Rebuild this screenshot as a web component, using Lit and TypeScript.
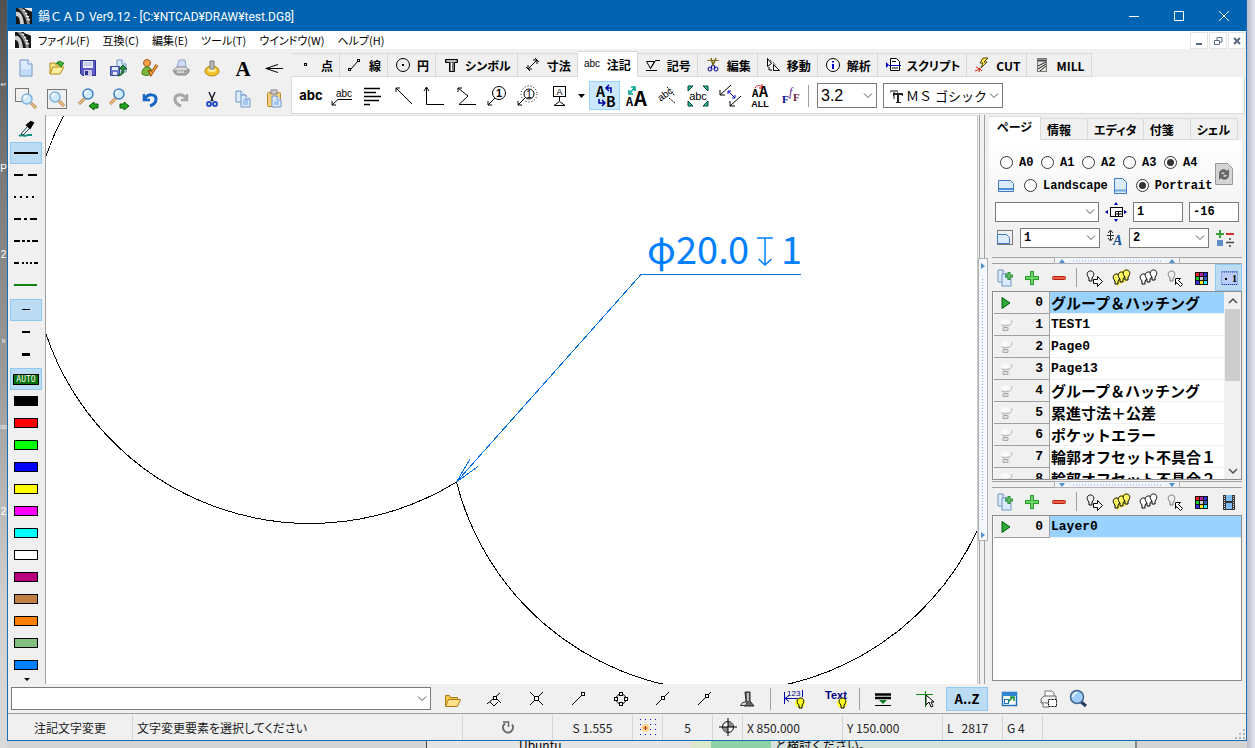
import { LitElement, html, svg, css, nothing, TemplateResult } from "lit";
import { customElement, property, state } from "lit/decorators.js";
import { classMap } from "lit/directives/class-map.js";

type Glyph = TemplateResult;

const icon = (w: number, h: number, body: unknown): Glyph =>
  html`<svg class="icon" width=${w} height=${h} viewBox="0 0 ${w} ${h}" aria-hidden="true">${body}</svg>`;

/* ---------- shared pieces ---------- */
const K = "#000";
const glass = (x: number, y: number) => svg`
  <g transform="translate(${x} ${y})">
    <line x1="10" y1="10" x2="16" y2="16" stroke="#b07a38" stroke-width="3"/>
    <line x1="10" y1="10" x2="16" y2="16" stroke="#f0c890" stroke-width="1.5"/>
    <circle cx="7" cy="7" r="5" fill="#cfeaff" stroke="#7fb2dc" stroke-width="1.5"/>
    <path d="M4 7a3 3 0 0 1 3-3" stroke="#fff" stroke-width="2" fill="none"/>
  </g>`;
const glassLeft = svg`
  <line x1="8" y1="11" x2="2" y2="17" stroke="#b07a38" stroke-width="3"/>
  <line x1="8" y1="11" x2="2" y2="17" stroke="#f0c890" stroke-width="1.5"/>
  <circle cx="11" cy="7" r="5" fill="#cfeaff" stroke="#3f7fc4" stroke-width="1.5"/>
  <path d="M8 7a3 3 0 0 1 3-3" stroke="#fff" stroke-width="2" fill="none"/>`;
const page = (x: number, y: number, w: number, h: number) => svg`
  <path d="M${x} ${y}h${w - 4}l4 4v${h - 4}h${-w}z" fill="#dcebfc" stroke="#6f94c4"/>
  <path d="M${x + w - 4} ${y}v4h4" fill="#fff" stroke="#6f94c4"/>`;
const appLogo = icon(16, 16, svg`
  <rect width="16" height="16" fill="#171717"/>
  <path d="M0 4C4 3 7 7 8 16H4C4 11 3 8 0 8z" fill="#cfcfcf"/>
  <path d="M2 0h4c4 3 7 9 8 16h-3C10 9 6 4 2 0z" fill="#8e8e8e"/>
  <path d="M7 2l2 1M9 5l2 1M10 8l3 1M11 11l3 1M9 0h7v3z" stroke="#eee" stroke-width="1.5" fill="#ddd"/>`);

/* ---------- main tool block ---------- */
const mainTools: [string, Glyph][] = [
  ["新規", icon(24, 24, svg`<path d="M6 4h8l4 4v12H6z" fill="#dcebfc" stroke="#6f94c4"/><path d="M7 13h10v6H7z" fill="#c2dcf8"/><path d="M14 4v4h4" fill="#fff" stroke="#6f94c4"/>`)],
  ["開く", icon(24, 24, svg`<path d="M5 18V7h5l1 2h5v3" fill="#fbe58a" stroke="#b28a14"/><path d="M5 18l3-7h11l-4 7z" fill="#fdf0a0" stroke="#b28a14"/><path d="M11 8c2-4 6-3 6-1h2l-3 4-4-4h2" fill="#46b33a" stroke="#1f7a17"/>`)],
  ["保存", icon(24, 24, svg`<path d="M4.500 4.500h15v15h-13l-2-2z" fill="#5a5ac8" stroke="#2f2f8f"/><rect x="7" y="5" width="10" height="7" fill="#e8ecff"/><path d="M8 7h8M8 9h8" stroke="#a9b0e0"/><rect x="8" y="14" width="8" height="6" fill="#c9cce0"/><rect x="9" y="15" width="3" height="4" fill="#2f2f8f"/>`)],
  ["書出", icon(24, 24, svg`${page(10, 4, 9, 12)}<path d="M3.500 10.500h9v9h-9z" fill="#6a78c8" stroke="#39459a"/><rect x="5" y="11" width="6" height="3" fill="#e8ecff"/><rect x="6" y="16" width="4" height="3" fill="#dfe4fa"/><path d="M11 19c3 0 4-2 4-6h-3l4-4 4 4h-3c0 5-2 6-6 7z" fill="#2c8f3c" stroke="#145a20"/>`)],
  ["編集者", icon(24, 24, svg`<circle cx="9" cy="7" r="3.500" fill="#f2a04a" stroke="#a2591a"/><path d="M4 18c0-5 2-7 5-7s5 2 5 6c-2 3-8 3-10 1z" fill="#79b83a" stroke="#3f7a14"/><path d="M11 14l2 4 6-9" stroke="#8a3a10" stroke-width="3" fill="none"/><path d="M12 15l1 3 6-9" stroke="#f0a030" stroke-width="1.500" fill="none"/>`)],
  ["印刷", icon(24, 24, svg`<path d="M10 4h6l1 7H8z" fill="#cfdcfa" stroke="#90a4c8"/><path d="M4 14l4-3h9l3 3-3 4H6z" fill="#dadada" stroke="#999"/><path d="M5 15h12l3-2v3l-3 3H8z" fill="#a8a8a8" stroke="#888"/><path d="M8 16h7" stroke="#fff"/>`)],
  ["設定", icon(24, 24, svg`<ellipse cx="12" cy="15" rx="7" ry="5" fill="#f2c230" stroke="#b98308"/><ellipse cx="12" cy="14" rx="4" ry="2" fill="#fff1a0"/><path d="M10 5h4v8h-4z" fill="#b9b9b9" stroke="#7d7d7d"/>`)],
  ["文字", icon(24, 24, svg`<text x="12" y="20" text-anchor="middle" font-family="Liberation Serif" font-weight="700" font-size="21">A</text>`)],
  ["矢印", icon(24, 24, svg`<path d="M3.500 12.500H21M16 8.500l-12 4 12 4" stroke="#000" fill="none"/>`)],
  ["範囲拡大", icon(24, 24, svg`<rect x="1.500" y="1.500" width="13" height="13" fill="none" stroke="#777"/>${glass(6, 5)}`)],
  ["全体表示", icon(24, 24, svg`<rect x="2.500" y="2.500" width="19" height="19" fill="none" stroke="#777"/>${glass(3, 3)}`)],
  ["前表示", icon(24, 24, svg`<g transform="translate(1 0)">${glassLeft}</g><path d="M13 19l5-4v2h4v4h-4v2z" fill="#23a51e" stroke="#0d5c0a"/>`)],
  ["次表示", icon(24, 24, svg`<g transform="translate(1 0)">${glassLeft}</g><path d="M22 19l-5-4v2h-4v4h4v2z" fill="#23a51e" stroke="#0d5c0a"/>`)],
  ["元に戻す", icon(24, 24, svg`<path d="M6 7v6h6" fill="none" stroke="#1767c4" stroke-width="2.500"/><path d="M7 12c3-6 11-5 11 0 0 4-3 6-6 7" fill="none" stroke="#1767c4" stroke-width="3"/>`)],
  ["やり直し", icon(24, 24, svg`<path d="M18 7v6h-6" fill="none" stroke="#a6a6a6" stroke-width="2.500"/><path d="M17 12c-3-6-11-5-11 0 0 4 3 6 6 7" fill="none" stroke="#a6a6a6" stroke-width="3"/>`)],
  ["切取り", icon(24, 24, svg`<path d="M9 5l4 9M15 5l-4 9" stroke="#223" stroke-width="1.500"/><circle cx="9" cy="17" r="2" fill="none" stroke="#2450c0" stroke-width="2"/><circle cx="15" cy="17" r="2" fill="none" stroke="#2450c0" stroke-width="2"/>`)],
  ["コピー", icon(24, 24, svg`${page(5, 4, 9, 11)}${page(10, 8, 9, 12)}<path d="M12 13h5M12 15h5M12 17h5" stroke="#6fa0e0"/>`)],
  ["貼付け", icon(24, 24, svg`<rect x="5.500" y="5.500" width="13" height="14" rx="1" fill="#f3cf7c" stroke="#b88a2e"/><rect x="9" y="3" width="6" height="4" fill="#ccc" stroke="#888"/>${page(10, 9, 9, 11)}<path d="M12 15h5M12 17h5" stroke="#6fa0e0"/>`)],
];

/* ---------- ribbon tabs ---------- */
const ribbonTabs: [string, Glyph][] = [
  ["点", icon(20, 20, svg`<rect x="7.500" y="8.500" width="2" height="2" fill="none" stroke="#000"/>`)],
  ["線", icon(20, 20, svg`<path d="M6 14L13 6" stroke="#000"/><rect x="3.500" y="13.500" width="2" height="2" fill="#fff" stroke="#000"/><rect x="12.500" y="4.500" width="2" height="2" fill="#fff" stroke="#000"/>`)],
  ["円", icon(20, 20, svg`<circle cx="10" cy="10" r="6.500" fill="none" stroke="#000"/><rect x="9" y="9" width="2" height="2"/>`)],
  ["シンボル", icon(20, 20, svg`<path d="M4.500 4.500h12v3h-3v9h-5v-9h-4z" fill="#777" stroke="#000"/><path d="M6 6h9M10.500 8v8" stroke="#fff"/>`)],
  ["寸法", icon(20, 20, svg`<path d="M5 14l9-9M5 10v4h4M10 5h4v4M3 12l4 4M12 3l4 4" stroke="#000" fill="none"/>`)],
  ["注記", icon(20, 20, svg`<text x="1" y="13" font-family="Liberation Sans" font-weight="400" font-size="10">abc</text>`)],
  ["記号", icon(20, 20, svg`<path d="M3.500 6.500h8l-4 7zM7.500 13.500l5-8H17M3 15.500h11" stroke="#000" fill="none"/>`)],
  ["編集", icon(20, 20, svg`<path d="M4 5.500h12" stroke="#887720"/><path d="M8 3l2 7 3-7" stroke="#776610" fill="none" stroke-width="1.500"/><path d="M9 10l-1 4M11 10l1 4" stroke="#00a"/><circle cx="7" cy="14" r="2" fill="none" stroke="#00a"/><circle cx="13" cy="14" r="2" fill="none" stroke="#00a"/>`)],
  ["移動", icon(20, 20, svg`<path d="M4.500 3.500v8l4-3zM10.500 9.500v6h6zM6 12v3h3" fill="none" stroke="#000"/><path d="M7 5l6 5" stroke="#000" stroke-dasharray="1 1"/>`)],
  ["解析", icon(20, 20, svg`<circle cx="10" cy="10" r="6.500" fill="#fff" stroke="#000"/><path d="M10 9v5M10 6v1.500" stroke="#00c" stroke-width="2"/>`)],
  ["スクリプト", icon(20, 20, svg`<path d="M7.500 3.500h6l3 3v9h-9z" fill="#fff" stroke="#000"/><path d="M3 7l3 3-3 3z" fill="#00c"/><path d="M6 10.500h12" stroke="#00c"/><path d="M9 6.500h4M9 13h6" stroke="#000"/>`)],
  ["CUT", icon(20, 20, svg`<path d="M11 3h5l-4 4h3l-6 6 2-5H8z" fill="#ffe94a" stroke="#554400"/><path d="M4 12l4 2M3 16l5-2M7 17l1-4M10 16l-2-2" stroke="#e02010"/>`)],
  ["MILL", icon(20, 20, svg`<rect x="5.500" y="3.500" width="9" height="13" fill="#e4e4dc" stroke="#777"/><path d="M6 5.500h8" stroke="#444" stroke-width="2"/><path d="M6 11l8-4M6 14l8-5M8 16l6-5" stroke="#222"/>`)],
];

/* ---------- annotation tools ---------- */
const noteTools: [string, Glyph, string?][] = [
  ["文字", icon(26, 26, svg`<text x="13" y="17" text-anchor="middle" font-family="Inter, Liberation Sans" font-weight="700" font-size="13">abc</text>`)],
  ["引出文字", icon(26, 26, svg`<text x="7" y="14" font-family="Liberation Sans" font-size="10">abc</text><path d="M23 16.500H9L3 22M3 18v4h4" stroke="#000" fill="none"/>`)],
  ["複数行", icon(26, 26, svg`<path d="M4 5.500h16M4 9.500h12M4 13.500h17M4 17.500h15M4 21.500h6" stroke="#000" stroke-width="1.500"/>`)],
  ["引出線", icon(26, 26, svg`<path d="M5 5l16 16M5 9V5h4" stroke="#000" fill="none"/>`)],
  ["引出線2", icon(26, 26, svg`<path d="M4.500 4v17.500H22M2 8l2.500-4L7 8" stroke="#000" fill="none"/>`)],
  ["引出線3", icon(26, 26, svg`<path d="M5 5l10 8-9 8.500h17M5 9V5h4" stroke="#000" fill="none"/>`)],
  ["バルーン", icon(26, 26, svg`<circle cx="15" cy="10" r="6.500" fill="none" stroke="#000"/><text x="15" y="14" text-anchor="middle" font-family="Liberation Sans" font-weight="700" font-size="11">1</text><path d="M11 15l-7 7M4 18v4h4" stroke="#000" fill="none"/>`)],
  ["自動バルーン", icon(26, 26, svg`<circle cx="14" cy="11" r="5" fill="none" stroke="#000"/><circle cx="14" cy="11" r="8" fill="none" stroke="#000" stroke-dasharray="1 2"/><text x="14" y="15" text-anchor="middle" font-family="Liberation Sans" font-size="10">1</text><path d="M10 15l-7 7M3 18v4h4" stroke="#000" fill="none"/>`)],
  ["データム", icon(26, 26, svg`<rect x="7.500" y="3.500" width="12" height="10" fill="none" stroke="#000"/><text x="13.500" y="12" text-anchor="middle" font-family="Liberation Sans" font-size="9">A</text><path d="M13.500 14v4M8 22.500l5.500-4 5.500 4z" stroke="#000" fill="none"/>`)],
  ["その他", icon(8, 26, svg`<path d="M0 11h7l-3.500 4z"/>`), "narrow"],
  ["文字変更", icon(26, 26, svg`<text x="4" y="14" font-family="Noto Sans CJK JP" font-weight="700" font-size="14">A</text><text x="14" y="24" font-family="Noto Sans CJK JP" font-weight="700" font-size="14">B</text><path d="M14 5h5v5M17 2l-3 3 3 3M7 16v4h5M10 17l3 3-3 3" stroke="#0000a0" stroke-width="1.500" fill="none"/>`), "on"],
  ["文字サイズ", icon(26, 26, svg`<text x="3" y="23" font-family="Noto Sans CJK JP" font-weight="700" font-size="11">A</text><text x="11" y="23" font-family="Noto Sans CJK JP" font-weight="700" font-size="20">A</text><path d="M6 11l6-7M6 7v4h4M8 4h4v4" stroke="#00a890" stroke-width="1.500" fill="none"/>`)],
  ["文字回転", icon(26, 26, svg`<text x="4" y="17" transform="rotate(-35 8 14)" font-family="Liberation Sans" font-size="10">abc</text><path d="M13 4l8 9M15 15l6 5" stroke="#000" fill="none" stroke-dasharray="2 1"/>`)],
  ["文字枠", icon(26, 26, svg`<text x="13" y="17" text-anchor="middle" font-family="Liberation Sans" font-size="11">abc</text><path d="M3 3h5L3 8zM23 3h-5l5 5zM3 23h5l-5-5zM23 23h-5l5-5z" fill="#20c0a0" stroke="#043"/>`)],
  ["矢印変更", icon(26, 26, svg`<path d="M15 2L4 12M4 7v5h5M25 13L14 23M14 18v5h5" stroke="#000" fill="none"/><path d="M12 8l7 7M12 11V8h3M19 12v3h-3" stroke="#00c" fill="none"/>`)],
  ["全文字変更", icon(26, 26, svg`<text x="5" y="14" font-family="Noto Sans CJK JP" font-weight="700" font-size="10">A</text><text x="12" y="14" font-family="Noto Sans CJK JP" font-weight="700" font-size="14">A</text><text x="13" y="24" text-anchor="middle" font-family="Liberation Sans" font-weight="700" font-size="9">ALL</text><path d="M8 5c2-3 5-3 7-1M12 5h3V1" stroke="#d01020" fill="none"/>`)],
  ["フォント", icon(26, 26, svg`<text x="4" y="20" font-family="Liberation Serif" font-weight="700" font-size="11" fill="#000090">F</text><text x="11" y="13" font-family="Liberation Serif" font-style="italic" font-size="12" fill="#702090">f</text><text x="15" y="18" font-family="Liberation Serif" font-weight="700" font-size="11" fill="#702040">F</text>`)],
];

/* ---------- snap / bottom tools ---------- */
const bulb = (x: number, y: number, s = K, f = "none") => svg`
  <path d="M${x + 2} ${y + 7}c-3-3-2-7 1.500-7s4.500 4 1.500 7v3h-3z" fill="${f}" stroke="${s}"/>`;
const snapTools: ([string, Glyph, string?] | null)[] = [
  ["開く", icon(24, 24, svg`<path d="M4.500 19V8.500h4l1 2h7v3" fill="#f4c64e" stroke="#a87c18"/><path d="M4.500 19.500l3-7h12l-3 7z" fill="#fde08a" stroke="#a87c18"/>`)],
  ["垂線", icon(24, 24, svg`<path d="M4 17L17 6M12 10l6 6M7 15l4 4 4-4" stroke="#000" fill="none"/><rect x="10.500" y="9.500" width="3" height="3" fill="#fff" stroke="#000"/>`)],
  ["交点", icon(24, 24, svg`<path d="M5 5l13 13M18 5L5 18" stroke="#000"/><rect x="9.500" y="9.500" width="4" height="4" fill="#fff" stroke="#000"/>`)],
  ["端点", icon(24, 24, svg`<path d="M5 18L15 8" stroke="#000"/><rect x="14.500" y="5.500" width="3" height="3" fill="#fff" stroke="#000"/>`)],
  ["円点", icon(24, 24, svg`<circle cx="12" cy="12" r="5" fill="none" stroke="#000"/><g fill="#fff" stroke="#000"><rect x="10.500" y="5.500" width="3" height="3"/><rect x="10.500" y="15.500" width="3" height="3"/><rect x="5.500" y="10.500" width="3" height="3"/><rect x="15.500" y="10.500" width="3" height="3"/></g>`)],
  ["中点", icon(24, 24, svg`<path d="M5 18L18 5" stroke="#000"/><rect x="10.500" y="9.500" width="3" height="3" fill="#fff" stroke="#000"/>`)],
  ["線上", icon(24, 24, svg`<path d="M5 18L18 5" stroke="#000"/><rect x="12.500" y="7.500" width="3" height="3" fill="#fff" stroke="#000"/>`)],
  ["測定", icon(24, 24, svg`<path d="M10 5h5v9l4 5H9l2-5z" fill="#666" stroke="#222"/><path d="M13 6v8" stroke="#bbb" stroke-width="2"/><path d="M5.500 18.500h5l2-4-5 1z" fill="#ddd" stroke="#333"/>`)],
  null,
  ["寸法表示", icon(28, 28, svg`<path d="M4.500 7v12M22.500 5v7M5 13.500h17M5 13.500l4-3M5 13.500l4 3" stroke="#00a" fill="none"/><text x="7" y="11" font-family="Liberation Sans" font-size="8" fill="#000080">123</text><circle cx="20" cy="18" r="5" fill="#ffff20"/>${bulb(17, 13)}`)],
  ["文字表示", icon(28, 28, svg`<text x="3" y="14" font-family="Liberation Sans" font-weight="700" font-size="11" fill="#000080">Text</text><circle cx="20" cy="18" r="5" fill="#ffff20"/>${bulb(17, 13)}`)],
  null,
  ["線幅", icon(24, 24, svg`<path d="M4 7.500h16M4 11h16" stroke="#000" stroke-width="2.500"/><path d="M8 13h8l-4 4z" fill="#088020"/><path d="M4 18.500h16" stroke="#000"/>`)],
  ["選択", icon(24, 24, svg`<path d="M3 7.500h17M12.500 4v16" stroke="#109010"/><path d="M13 8v10l3-3 2 5 2-1-2-4h3z" fill="#fff" stroke="#000"/>`)],
  ["並べ替え", icon(28, 24, svg`<text x="14" y="17" text-anchor="middle" font-family="Noto Sans CJK JP" font-weight="700" font-size="13">A..Z</text>`), "on"],
  ["ウインドウ", icon(24, 24, svg`<rect x="5.500" y="5.500" width="14" height="13" fill="#fff" stroke="#2070b8" stroke-width="1.500"/><path d="M5 5h15v4H5z" fill="#2f86d0"/><rect x="7.500" y="12.500" width="4" height="4" fill="none" stroke="#2070b8"/><path d="M11 15l5-5M13 10h4v4" stroke="#109030" stroke-width="1.500" fill="none"/>`)],
  ["印刷範囲", icon(22, 24, svg`<path d="M7 4h7l2 2v4H7z" fill="#fff" stroke="#777"/><path d="M3 12l3-3h12v7H3z" fill="#eee" stroke="#666"/><path d="M5 15v5h6" stroke="#666" fill="#fff"/><rect x="10.500" y="12.500" width="8" height="7" fill="#fff" stroke="#000" stroke-dasharray="2 1"/>`), "mid"],
  ["検索", icon(20, 24, svg`<path d="M12 14l6 5" stroke="#223a66" stroke-width="3"/><circle cx="9" cy="10" r="6.500" fill="#9fd0fb" stroke="#44648c" stroke-width="1.500"/><path d="M5 10a4 4 0 0 1 4-4" stroke="#fff" stroke-width="1.500" fill="none"/>`), "narrow"],
];

/* ---------- list tools in the side panel ---------- */
const bulbs = (f: string) => svg`${bulb(2, 6, K, f)}${bulb(7, 4, K, f)}${bulb(12, 2, K, f)}`;
const listTools = (last: Glyph, lastOn: boolean): ([string, Glyph, boolean?] | null)[] => [
  ["複製", icon(20, 20, svg`${page(3, 2, 9, 12)}${page(7, 6, 9, 12)}<path d="M14 4v8M10 8h8" stroke="#2c8c38" stroke-width="3"/><path d="M14 5v6M11 8h6" stroke="#74cf72"/>`)],
  ["追加", icon(20, 20, svg`<path d="M10 3v14M3 10h14" stroke="#2c9a34" stroke-width="4"/><path d="M10 4v12M4 10h12" stroke="#6fd468" stroke-width="2"/>`)],
  ["削除", icon(20, 20, svg`<rect x="3.500" y="8.500" width="13" height="3" rx="1" fill="#f06048" stroke="#b02010"/>`)],
  null,
  ["表示", icon(20, 20, svg`${bulb(3, 3)}<path d="M9.500 11.500h4v-3l5 5-5 5v-3h-4z" fill="#fff" stroke="#000"/>`)],
  ["全表示", icon(20, 20, svg`<path d="M2 8l12-7 5 3-3 9-10 5z" fill="#fff860"/>${bulbs("#fff860")}`)],
  ["全非表示", icon(20, 20, bulbs("#fff"))],
  ["参照", icon(20, 20, svg`${bulb(3, 3, "#777")}<path d="M10.500 10.500h5l-2 2 4 4-2 2-4-4-1 2z" fill="#fff" stroke="#000"/>`)],
  ["色", icon(20, 20, svg`<rect x="3" y="4" width="13" height="13" fill="#111"/>${["#f22", "#c2208a", "#33d", "#2c2", "#ccc", "#36a", "#33f", "#fe2", "#2ff"].map(
    (c, i) => svg`<rect x=${4 + (i % 3) * 4} y=${5 + Math.floor(i / 3) * 4} width="3" height="3" fill=${c}/>`)}`)],
  ["モード", last, lastOn],
];
const rulerIcon = icon(20, 20, svg`<rect x="2.500" y="3.500" width="16" height="13" fill="#b9cdf8" stroke="#90a8e0"/><path d="M3 4h16M3 16.500h16" stroke="#1030b0" stroke-dasharray="1 1"/><text x="13" y="14" font-family="Liberation Serif" font-weight="700" font-size="10">1</text><rect x="6" y="10" width="2" height="2"/>`);
const filmIcon = icon(20, 20, svg`<rect x="4" y="3" width="12" height="15" fill="#333"/><rect x="7" y="3" width="6" height="6" fill="#7fbdf5"/><rect x="7" y="11" width="6" height="6" fill="#7fbdf5"/><path d="M5.500 4v13M14.500 4v13" stroke="#ddd" stroke-dasharray="1 1"/>`);
const playIcon = icon(12, 14, svg`<path d="M2 1.500L10 7l-8 5.500z" fill="#2cab34" stroke="#0a5c14"/>`);
const offBulb = icon(14, 14, svg`<circle cx="5" cy="5" r="4" fill="#fafafa"/><path d="M8 8c3-1 4-3 4-6" stroke="#bbb" fill="none"/><path d="M1.500 6.500c1 2 6 2 7 0M3 9.500h5v3H3z" stroke="#aaa" fill="#ddd"/>`);

const lineStyles = ["", "9 5", "2 4", "7 3 3 3", "6 2 3 2 3 2", "5 3 2 2 2 2 2 2"];
const swatches = ["#000000", "#ff0000", "#00ff00", "#0000ff", "#ffff00", "#ff00ff", "#00ffff", "#ffffff", "#b8007c", "#bf8040", "#ff8000", "#80bf80", "#0080ff"];
const pages = ["グループ＆ハッチング", "TEST1", "Page0", "Page13", "グループ＆ハッチング", "累進寸法＋公差", "ポケットエラー", "輪郭オフセット不具合１", "輪郭オフセット不具合２"];

const base = css`
  * { box-sizing: border-box; }
  button, input, select { font: inherit; color: inherit; margin: 0; }
  button { border: 0; padding: 0; background: none; display: flex; align-items: center; justify-content: center; }
  .icon { display: block; flex: none; }
`;

@customElement("combo-box")
class ComboBox extends LitElement {
  @property() label = "";
  @property() value = "";
  static styles = [base, css`
    :host { display: grid; border: 1px solid #7a7a7a; background: #fff; }
    select { grid-area: 1 / 1; appearance: none; border: 0; background: transparent; width: 100%; height: 100%; min-width: 0; padding: 0 14px 0 3px; outline: 0; }
    :host([indented]) select { padding-left: 22px; }
    .chevron { grid-area: 1 / 1; justify-self: end; align-self: center; margin-right: 3px; pointer-events: none; }
  `];
  render() {
    return html`<select aria-label=${this.label}><option>${this.value}</option></select>
      <svg class="chevron" width="10" height="6" viewBox="0 0 10 6"><path d="M1 .5l4 4 4-4" fill="none" stroke="#555"/></svg>`;
  }
}

@customElement("entity-list")
class EntityList extends LitElement {
  @property({ attribute: false }) rows: string[] = [];
  @property({ type: Boolean }) scroll = false;
  @property() label = "";
  @state() current = 0;
  static styles = [base, css`
    :host { display: flex; overflow: hidden; border: 1px solid #8c8c8c; background: #fff; min-height: 0; }
    .body { flex: 1; overflow: hidden; min-width: 0; padding-left: 1px; }
    table { width: 100%; border-collapse: separate; border-spacing: 0; table-layout: fixed; }
    th { width: 56px; padding: 0; background: #f0f0f0; border-right: 1px solid #a0a0a0; border-bottom: 1px solid #a0a0a0; font: 700 13px "Liberation Mono", monospace; }
    .head { display: flex; align-items: center; justify-content: space-between; height: 21px; padding: 0 6px; }
    td { padding: 0 1px; border-bottom: 1px solid #f0f0f0; height: 22px; font: 700 13px/20px "Liberation Mono", "Noto Sans CJK JP", monospace; white-space: nowrap; overflow: hidden; }
    td.wide { font-family: "Noto Sans CJK JP", sans-serif; font-size: 15px; }
    .current td { background: #99d1ff; }
    .bar { width: 17px; background: #f0f0f0; display: flex; flex-direction: column; align-items: center; }
    .bar button { height: 17px; width: 17px; }
    .thumb { width: 15px; height: 72px; background: #cdcdcd; }
    .fill { flex: 1; }
  `];
  render() {
    return html`<div class="body"><table aria-label=${this.label}><tbody>
      ${this.rows.map((r, i) => html`<tr class=${classMap({ current: i === this.current })} @click=${() => (this.current = i)}>
        <th scope="row"><div class="head">${i === this.current ? playIcon : offBulb}<span>${i}</span></div></th>
        <td class=${classMap({ wide: r.charCodeAt(0) > 255 })}>${r}</td></tr>`)}
      </tbody></table></div>
      ${this.scroll ? html`<div class="bar">
        <button aria-label="上へ">${icon(10, 8, svg`<path d="M1 6l4-4 4 4" stroke="#505050" stroke-width="1.500" fill="none"/>`)}</button>
        <div class="thumb"></div><div class="fill"></div>
        <button aria-label="下へ">${icon(10, 8, svg`<path d="M1 2l4 4 4-4" stroke="#505050" stroke-width="1.500" fill="none"/>`)}</button></div>` : nothing}`;
  }
}

@customElement("side-panel")
class SidePanel extends LitElement {
  @state() size = "A4";
  @state() orient = "Portrait";
  static styles = [base, css`
    :host { display: flex; flex-direction: column; background: #f0f0f0; padding: 1px 4px 3px 1px; min-height: 0; font: 700 12px "Liberation Mono", "Noto Sans CJK JP", monospace; }
    .tabs { display: flex; align-items: flex-end; height: 24px; }
    .tab { height: 22px; min-width: 47px; padding: 0 6px; justify-content: flex-start; border: 1px solid #d9d9d9; border-left: 0; white-space: nowrap; font: 700 12px "Noto Sans CJK JP", sans-serif; font-feature-settings: "palt"; }
    .tab.on { height: 24px; min-width: 52px; padding: 0 8px 3px; background: #fff; border-bottom-color: #fff; }
    .form { background: linear-gradient(#fff, #ededed); padding: 11px 3px 0 6px; height: 116px; display: grid; grid-template-rows: 19px 29px 26px 26px; }
    .row { display: flex; align-items: center; }
    .sheets { display: grid; grid-template-columns: 1fr 25px; grid-row: 1 / 3; }
    .refresh { height: 24px; margin-top: 11px; justify-content: flex-start; }
    .opt { display: flex; align-items: center; gap: 6px; height: 23px; }
    .papers { padding-left: 5px; }
    .paper { width: 41px; }
    input[type="radio"] { appearance: none; width: 13px; height: 13px; border: 1px solid #333; border-radius: 50%; background: #fff; display: grid; place-items: center; }
    input[type="radio"]:checked::after { content: ""; width: 7px; height: 7px; border-radius: 50%; background: #333; }
    input[type="text"] { width: 50px; height: 20px; border: 1px solid #7a7a7a; background: #fff; padding: 0 3px; outline: 0; }
    .gap { gap: 5px; }
    .space { justify-content: space-between; }
    .long { width: 104px; height: 20px; }
    .short { width: 80px; height: 20px; }
    .split { height: 7px; margin: 1px 0 0 3px; border-top: 1px solid #a0a0a0; border-bottom: 1px solid #a0a0a0; display: flex; justify-content: center; align-items: center; }
    .grip { width: 126px; height: 7px; background: #f0f6fc; border: 1px solid #b0b0b0; display: flex; align-items: center; justify-content: center; }
    .tools { display: flex; height: 27px; flex: none; padding-left: 2px; }
    .tools button { width: 27px; height: 27px; }
    .tools button.on { background: #bcdcf4; outline: 1px solid #90c8f0; outline-offset: -1px; }
    .sep { width: 1px; margin: 4px 3px 4px 4px; background: #a0a0a0; }
    .pages { height: 189px; margin-left: 3px; }
    .layers { flex: 1; margin-left: 3px; }
  `];
  private paper(s: string) {
    return html`<label class="opt paper"><input type="radio" name="paper" .checked=${this.size === s} @change=${() => (this.size = s)}>${s}</label>`;
  }
  private way(s: string) {
    return html`<label class="opt"><input type="radio" name="way" .checked=${this.orient === s} @change=${() => (this.orient = s)}>${s}</label>`;
  }
  private tools(last: Glyph, on: boolean) {
    return html`<div class="tools">${listTools(last, on).map((t) => t
      ? html`<button class=${classMap({ on: !!t[2] })} aria-label=${t[0]}>${t[1]}</button>` : html`<div class="sep"></div>`)}</div>`;
  }
  private grip(up: boolean) {
    const p = up ? "M0 5l3-4 3 4z" : "M0 1l3 4 3-4z";
    return html`<div class="split"><div class="grip">${icon(116, 6, svg`
      <path d=${p} fill="#4f8fd0"/><path d="M14 3h88" stroke="#7fa8d8" stroke-dasharray="1 2"/><path d=${p} transform="translate(110)" fill="#4f8fd0"/>`)}</div></div>`;
  }
  render() {
    return html`
      <div class="tabs" role="tablist">${["ページ", "情報", "エディタ", "付箋", "シェル"].map((t, i) =>
        html`<button role="tab" class=${classMap({ tab: true, on: i === 0 })}>${t}</button>`)}</div>
      <div class="form">
        <div class="sheets">
          <div>
            <div class="row papers">${["A0", "A1", "A2", "A3", "A4"].map((s) => this.paper(s))}</div>
            <div class="row gap">
              ${icon(24, 18, svg`<path d="M3.500 3.500h12l3 3v8h-15z" fill="#dcebfc" stroke="#3f78c0"/><path d="M4 12h14" stroke="#4a90d8" stroke-width="2"/>`)}
              ${this.way("Landscape")}
              ${icon(18, 18, svg`<path d="M1.500 1.500h8l4 4v11h-12z" fill="#dcebfc" stroke="#3f78c0"/><path d="M2 13.500h11" stroke="#6fa8e0" stroke-width="2"/>`)}
              ${this.way("Portrait")}
            </div>
          </div>
          <button class="refresh" aria-label="更新">${icon(20, 24, svg`<path d="M1.500 1.500h12l5 5v16h-17z" fill="#d4d4d4" stroke="#999"/><path d="M5 12c0-5 6-6 8-3l2-2v6H9l2-2c-2-2-4 0-4 1zM15 13c0 5-6 6-8 3l-2 2v-6h6l-2 2c2 2 4 0 4-1z" fill="#666"/>`)}</button>
        </div>
        <div class="row space">
          <combo-box class="long" label="用紙"></combo-box>
          ${icon(22, 20, svg`<rect x="5.500" y="5.500" width="12" height="9" fill="#fff" stroke="#000"/><path d="M10.500 14V9.500h7M10 12h7M13.500 9v5" stroke="#000" fill="none"/><path d="M11 0l2 3H9zM11 20l2-3H9zM0 10l3-2v4zM22 10l-3-2v4z" fill="#0000c0"/>`)}
          <input type="text" aria-label="倍率" value="1"><input type="text" aria-label="位置" value="-16">
        </div>
        <div class="row gap">
          ${icon(20, 18, svg`<rect x="2.500" y="1.500" width="15" height="14" fill="none" stroke="#000" stroke-dasharray="1 1"/><path d="M2.500 5.500h9l3 3v6h-12z" fill="#dcebfc" stroke="#3f78c0"/>`)}
          <combo-box class="short" label="縮尺" value="1"></combo-box>
          ${icon(19, 18, svg`<path d="M5.500 2v9M3 4l2.500-3L8 4M3 9l2.500 3L8 9M2 6.500h7" stroke="#222" fill="none"/><text x="8" y="16" font-family="Liberation Serif" font-weight="700" font-style="italic" font-size="14" fill="#1a4f90">A</text>`)}
          <combo-box class="short" label="文字高" value="2"></combo-box>
          ${icon(22, 20, svg`<path d="M6 2v8M2 6h8" stroke="#38a038" stroke-width="2"/><path d="M12 6h8" stroke="#d03030" stroke-width="2"/><rect x="3" y="12" width="6" height="6" fill="#5f8fc8"/><path d="M12 14.500h8M15 11h2M15 18h2" stroke="#444" stroke-width="1.500"/>`)}
        </div>
      </div>
      ${this.grip(true)}
      ${this.tools(rulerIcon, true)}
      <entity-list class="pages" label="ページ" scroll .rows=${pages}></entity-list>
      ${this.grip(false)}
      ${this.tools(filmIcon, false)}
      <entity-list class="layers" label="レイヤ" .rows=${["Layer0"]}></entity-list>`;
  }
}

@customElement("app-root")
class AppRoot extends LitElement {
  static styles = [base, css`
    :host { display: grid; grid-template: 1fr 7px / 7px 1fr 8px; height: 100vh; overflow: hidden; background: #d4d4d4; color: #000; font: 12px "Noto Sans CJK JP", sans-serif; }
    .left { grid-row: 1 / 3; background: linear-gradient(#505050, #7c7c7c 25%, #9a9a9a 50%, #cfcfcf 80%, #dadada); display: flex; flex-direction: column; align-items: center; justify-content: space-evenly; color: #fff; font: 6px/12px "Liberation Sans", sans-serif; padding: 4px 0 156px; }
    .left .one { font-size: 10px; }
    .right { grid-column: 3; grid-row: 1 / 3; background: linear-gradient(90deg, #b9bdca, #e4e5ee); }
    .below { grid-column: 2; grid-row: 2; display: flex; overflow: hidden; background: #d4d4d4; line-height: 7px; align-items: stretch; }
    .below .a { width: 420px; border-right: 1px solid #444; }
    .below .b { width: 264px; padding-left: 92px; background: #e4e4e4; }
    .below .c { width: 20px; background: #dce8cc; }
    .below .d { width: 60px; background: #8fd2a8; }
    .below .e { width: 366px; background: #d8e2dc; border-right: 2px solid #888; padding-left: 4px; }
    .window { grid-column: 2; grid-row: 1; display: grid; grid-template-rows: 31px 18px 66px 1fr 29px 27px; border: 1px solid #1a6cb4; border-top: 0; background: #f0f0f0; min-width: 0; min-height: 0; }
    .title { display: flex; align-items: center; padding-left: 8px; background: #0063b1; color: #fff; }
    .title h1 { font: 400 12px Roboto, "Noto Sans CJK JP", sans-serif; margin: 0 0 0 6px; flex: 1; }
    .title button { width: 45px; height: 31px; }
    .menu { display: flex; align-items: center; background: #fff; padding-left: 7px; font-size: 11px; font-feature-settings: "palt"; }
    .menu nav { display: flex; gap: 13px; flex: 1; margin-left: 7px; }
    .menu .mdi { width: 18px; height: 17px; border: 1px solid #e2e2e2; margin-left: 1px; align-self: flex-end; }
    .bars { display: grid; grid-template-columns: 283px 1fr; }
    .main { display: grid; grid-template-columns: repeat(9, 31px); grid-auto-rows: 31px; padding: 3px 0 0 2px; }
    .ribbon { display: flex; flex-direction: column; min-width: 0; padding: 2px 1px 1px 0; }
    .tabs { display: flex; align-items: flex-end; padding-left: 1px; height: 26px; }
    .tab { height: 24px; gap: 4px; padding: 0 6px 0 5px; border: 1px solid #d9d9d9; border-left: 0; white-space: nowrap; font: 700 12px "Noto Sans CJK JP", sans-serif; font-feature-settings: "palt"; }
    .tab.on { height: 26px; background: #fff; border-bottom-color: #fff; }
    .tools { flex: 1; display: flex; align-items: center; background: #fff; border: 1px solid #d9d9d9; border-top: 0; padding: 1px 0 0 3px; }
    .tools button { width: 31px; height: 29px; }
    .tools button.narrow { width: 15px; }
    .on-tool { background: #cce8ff; outline: 1px solid #99d1ff; outline-offset: -1px; }
    .sep { width: 1px; height: 22px; background: #a0a0a0; margin: 0 2px; }
    .tools .sep { margin: 0 8px 0 2px; }
    .size, .face { height: 25px; font: 16px "Liberation Sans", "Noto Sans CJK JP", sans-serif; }
    .size { width: 60px; margin-right: 6px; }
    .font { width: 120px; height: 25px; display: grid; }
    .font > * { grid-area: 1 / 1; }
    .face { font: 13px "Noto Sans CJK JP", sans-serif; }
    .font .icon { margin: 5px 0 0 6px; pointer-events: none; z-index: 1; }
    .work { display: grid; grid-template-columns: 38px 1fr 11px 258px; min-height: 0; }
    .palette { display: flex; flex-direction: column; align-items: flex-start; padding: 1px 0 0 2px; border-right: 1px solid #a0a0a0; overflow: hidden; }
    .palette button { width: 32px; height: 22px; flex: none; }
    .palette .pick { height: 26px; }
    .palette .group { margin-top: 3px; }
    .sel { background: #bcdcf4; border: 1px solid #90c8f0; }
    .auto { background: #087008; border: 1px solid #000; color: #fff; font: 8px/9px "DejaVu Sans Mono", monospace; width: 26px; height: 11px; display: grid; place-items: center; }
    .swatch { width: 24px; height: 10px; border: 1px solid #000; }
    .canvas { background: #fff; overflow: hidden; border-top: 1px solid #e0e0e0; }
    .canvas svg { display: block; width: 100%; height: 100%; }
    .vsplit { border-left: 1px solid #c8c8c8; display: flex; flex-direction: column; justify-content: center; align-items: center; background: linear-gradient(90deg, transparent 1px, #a0a0a0 1px 2px, transparent 2px 6px, #a0a0a0 6px 7px, transparent 7px); }
    .vgrip { width: 10px; height: 283px; background: #f4f8fc; border: 1px solid #b0b0b0; }
    .bottom { display: flex; align-items: center; padding-left: 3px; }
    .bottom button { width: 42px; height: 24px; }
    .bottom button.narrow { width: 20px; }
    .bottom button.mid { width: 38px; }
    .command { width: 420px; height: 23px; margin-right: 1px; }
    .status { display: flex; align-items: center; border-top: 1px solid #a0a0a0; color: #222; }
    .status > div { height: 25px; border-right: 1px solid #d4d4d4; display: flex; align-items: center; padding: 0 4px; white-space: pre; }
    .status .mid { justify-content: center; }
    .status .last { flex: 1; border: 0; justify-content: flex-end; align-items: flex-end; padding: 0 1px 1px; }
    .w30 { width: 30px; } .w50 { width: 50px; } .w40 { width: 40px; } .w60 { width: 60px; } .w80 { width: 80px; }
    .w90 { width: 90px; } .w100 { width: 100px; } .w125 { width: 125px; } .w330 { width: 330px; }
    .hint { font-feature-settings: "palt"; }
  `];

  private strokeButton(dash: string, i: number) {
    return html`<button class=${classMap({ sel: i === 0 })} aria-label="線種${i}">${icon(26, 12, svg`<path d="M1 6h24" stroke="#000" stroke-width="2" stroke-dasharray=${dash || "none"}/>`)}</button>`;
  }

  render() {
    return html`
      <div class="left"><span>er</span><span class="one">P</span><span class="one">2</span><span>fi</span><span>00</span><span class="one">2</span></div>
      <div class="window">
        <header class="title">${appLogo}<h1>鍋ＣＡＤ Ver9.12 - [C:¥NTCAD¥DRAW¥test.DG8]</h1>
          ${[["最小化", "M0 5.500h10"], ["最大化", "M.5 .5h9v9h-9z"], ["閉じる", "M0 0l10 10M10 0L0 10"]].map(([n, d]) =>
            html`<button aria-label=${n}>${icon(10, 10, svg`<path d=${d} stroke="#fff" fill="none"/>`)}</button>`)}
        </header>
        <div class="menu">${appLogo}
          <nav>${["ファイル(F)", "互換(C)", "編集(E)", "ツール(T)", "ウインドウ(W)", "ヘルプ(H)"].map((m) => html`<button>${m}</button>`)}</nav>
          ${[["最小化", "M2 8h6"], ["元に戻す", "M1.500 4.500h5v4h-5zM4 4V1.500h5V6H7"], ["閉じる", "M2 2l6 6M8 2L2 8"]].map(([n, d], i) =>
            html`<button class="mdi" aria-label=${n}>${icon(10, 10, svg`<path d=${d} stroke="#5a6a80" stroke-width=${i === 1 ? 1 : 2} fill="none"/>`)}</button>`)}
        </div>
        <div class="bars">
          <div class="main">${mainTools.map(([n, g]) => html`<button aria-label=${n}>${g}</button>`)}</div>
          <div class="ribbon">
            <div class="tabs" role="tablist">${ribbonTabs.map(([n, g], i) =>
              html`<button role="tab" class=${classMap({ tab: true, on: i === 5 })}>${g}${n}</button>`)}</div>
            <div class="tools">
              ${noteTools.map(([n, g, c]) => html`<button class=${classMap({ narrow: c === "narrow", "on-tool": c === "on" })} aria-label=${n}>${g}</button>`)}
              <div class="sep"></div>
              <combo-box class="size" label="文字高" value="3.2"></combo-box>
              <div class="font">
                <combo-box class="face" indented label="フォント" value="ＭＳ ゴシック"></combo-box>
                ${icon(16, 16, svg`<path d="M1 2h8v3H8V4H6v7H4V4H2v1H1z" fill="#888"/><path d="M4 5h10v3h-1V7h-3v7h2v1H7v-1h1V7H5v1H4z" fill="#222"/>`)}
              </div>
            </div>
          </div>
        </div>
        <div class="work">
          <div class="palette">
            <button class="pick" aria-label="属性取得">${icon(20, 20, svg`<path d="M3 17c3-2 6 1 9-1h4" stroke="#109080" stroke-width="2" fill="none"/><path d="M5 15l7-8 2 2-7 7z" fill="#dff" stroke="#333"/><path d="M11 6l3 3 3-5-2-1z" fill="#000" stroke="#000" stroke-width="2"/>`)}</button>
            ${lineStyles.map((d, i) => this.strokeButton(d, i))}
            <button aria-label="補助線">${icon(26, 12, svg`<path d="M1 6h23" stroke="#108010" stroke-width="2"/>`)}</button>
            ${[1, 2, 3].map((w) => html`<button class=${classMap({ sel: w === 1, group: w === 1 })} aria-label="線幅${w}">${icon(8, 12, svg`<rect y="5" width="8" height=${w}/>`)}</button>`)}
            <button class="sel group"><span class="auto">AUTO</span></button>
            ${swatches.map((c) => html`<button aria-label=${c}><span class="swatch" style="background:${c}"></span></button>`)}
            ${icon(32, 6, svg`<path d="M14 2h6l-3 3z"/>`)}
          </div>
          <main class="canvas">
            <svg role="img" aria-label="図面"><g transform="translate(-46 -116)" fill="none">
              <path d="M63.500 116A279 279 0 0 0 46 156M46 334A279 279 0 0 0 456.500 482A277.500 277.500 0 0 0 977 531" stroke="#000" shape-rendering="crispEdges"/>
              <path d="M801 274.500H641L456.500 482M470 459l-13.500 23L478 466.500" stroke="#0072e0" shape-rendering="crispEdges"/>
              <path d="M757 238h16M765 238v26M758.500 259l6.500 6 6.500-6" stroke="#0080ff" stroke-width="1.500"/>
              <g fill="#0080ff" font-family="Noto Sans CJK JP" font-size="38">
                <text x="647" y="264">φ</text><text x="676" y="264">20.</text><text x="728" y="264">0</text><text x="781" y="264">1</text>
              </g>
            </g></svg>
          </main>
          <div class="vsplit"><div class="vgrip">${icon(8, 281, svg`<path d="M2 4l4 3-4 3zM2 273l4 3-4 3z" fill="#4f8fd0"/><path d="M3.500 20v242" stroke="#7fa8d8" stroke-dasharray="1 2"/>`)}</div></div>
          <side-panel></side-panel>
        </div>
        <div class="bottom">
          <combo-box class="command" label="コマンド"></combo-box>
          ${snapTools.map((t) => t
            ? html`<button class=${classMap({ sel: t[2] === "on", narrow: t[2] === "narrow", mid: t[2] === "mid" })} aria-label=${t[0]}>${t[1]}</button>`
            : html`<div class="sep"></div>`)}
        </div>
        <footer class="status">
          <div class="w125 mid">注記文字変更</div>
          <div class="w330 hint">文字変更要素を選択してください</div>
          <div class="w90 mid">${icon(16, 16, svg`<path d="M5 4.500a5 5 0 1 0 7 1" stroke="#666" stroke-width="2" fill="none"/><path d="M3 3h5.500v5" stroke="#666" stroke-width="1.500" fill="none"/>`)}</div>
          <div class="w80 mid">S 1.555</div>
          <div class="w30 mid">${icon(20, 20, svg`<path d="M2.500 2v18M7.500 2v18M12.500 2v18M17.500 2v18" stroke="#1010c0" stroke-dasharray="1 4"/><circle cx="7.500" cy="11" r="4" fill="#ffd890"/><path d="M7.500 9v4M5.500 11h4" stroke="#c03010"/>`)}</div>
          <div class="w50 mid">5</div>
          <div class="w30 mid">${icon(18, 18, svg`<circle cx="9" cy="9" r="5.500" fill="#fff" stroke="#000"/><path d="M9 9V3.500A5.500 5.500 0 0 1 14.500 9zM9 9v5.500A5.500 5.500 0 0 1 3.500 9z" fill="#888"/><path d="M9 0v18M0 9h18" stroke="#000"/>`)}</div>
          <div class="w100">X 850.000</div>
          <div class="w100">Y 150.000</div>
          <div class="w60">L   2817</div>
          <div class="w40">G 4</div>
          <div class="last">${icon(10, 10, svg`<path d="M8 0h2v2H8zM8 4h2v2H8zM8 8h2v2H8zM4 4h2v2H4zM4 8h2v2H4zM0 8h2v2H0z" fill="#b4b4b4"/>`)}</div>
        </footer>
      </div>
      <div class="right"></div>
      <div class="below"><div class="a"></div><div class="b">Ubuntu</div><div class="c"></div><div class="d"></div><div class="e">と検討ください。</div></div>`;
  }
}
